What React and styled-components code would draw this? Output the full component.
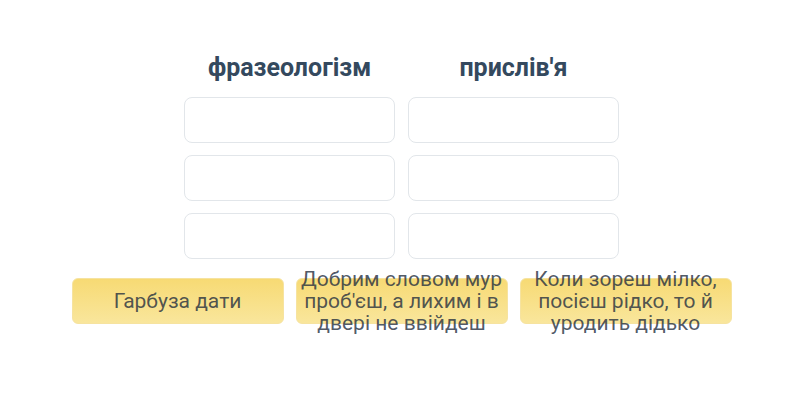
import styled, { createGlobalStyle } from 'styled-components'

const GlobalStyle = createGlobalStyle`
    html, body {
        margin: 0;
        padding: 0;
        background: #ffffff;
        font-family: Roboto, "Noto Sans", sans-serif;
    }
`

const columns = ['фразеологізм', 'прислів\'я']

const answers = [
    'Гарбуза дати',
    'Добрим словом мур проб\'єш, а лихим і в двері не ввійдеш',
    'Коли зореш мілко, посієш рідко, то й уродить дідько',
]

export default function App(){
    return <Page>
        <GlobalStyle/>
        <Board>
            {columns.map(title => <Heading key={title}>{title}</Heading>)}
            {Array.from({length: 6}).map((_, i) => <DropSlot key={i}/>)}
        </Board>
        <Options>
            {answers.map(text => <Option key={text}>
                <span>{text}</span>
            </Option>)}
        </Options>
    </Page>
}

const Page = styled.div`
    width: 800px;
    height: 400px;
    display: flex;
    flex-direction: column;
    align-items: center;
    padding-top: 51px;
    padding-left: 3px;
    box-sizing: border-box;
`

const Board = styled.div`
    display: grid;
    grid-template-columns: 211px 211px;
    column-gap: 13px;
    row-gap: 12px;
    grid-auto-rows: 46px;
    grid-template-rows: 34px;
`

const Heading = styled.h2`
    margin: 0;
    font-size: 25px;
    font-weight: 700;
    color: #34495e;
    text-align: center;
    line-height: 34px;
    margin-bottom: -1px;
`

const DropSlot = styled.div`
    border: 1px solid #e2e6ea;
    border-radius: 8px;
    background: #ffffff;
`

const Options = styled.div`
    display: flex;
    gap: 12px;
    margin-top: 19px;
`

const Option = styled.div`
    width: 212px;
    height: 46px;
    box-sizing: border-box;
    border-radius: 6px;
    background: linear-gradient(#f7da74, #f9e69c);
    border: 1px solid #f6e3a0;
    display: flex;
    align-items: center;
    justify-content: center;
    text-align: center;

    span{
        font-size: 21px;
        line-height: 22px;
        color: rgba(36, 46, 62, 0.8);
        padding: 0 3px;
        white-space: normal;
    }
`
